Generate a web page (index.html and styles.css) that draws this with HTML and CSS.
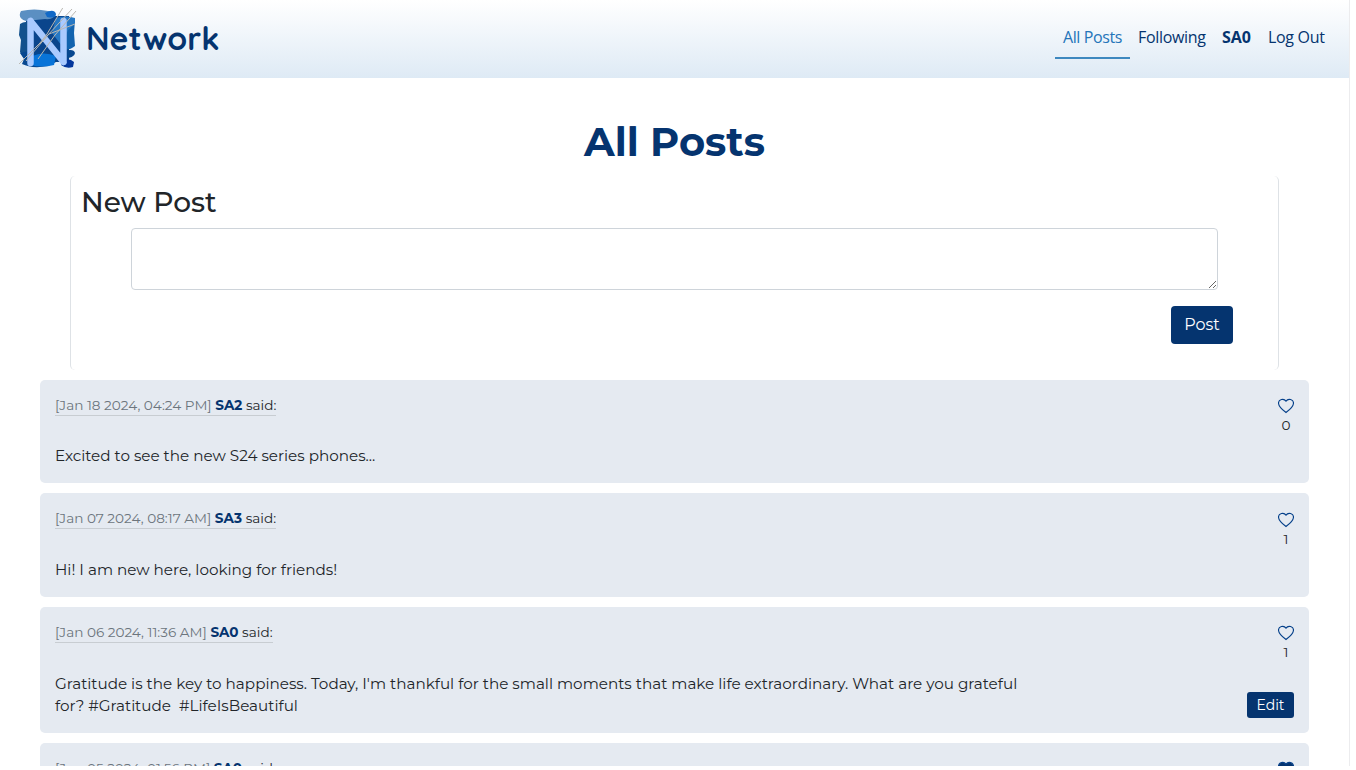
FILE: index.html
```html
<!DOCTYPE html>
<html lang="en">
<head>
<meta charset="utf-8">
<title>Network</title>
<link rel="stylesheet" href="styles.css">
</head>
<body>
<div class="page">
<header class="navbar">
  <a class="brand">
    <svg class="logo" width="60" height="62" viewBox="0 0 60 62">
      <path d="M8 8H51V54H8Z" fill="#0a458c"/>
      <path d="M2 16Q8 12 13 16L14 46Q10 52 5 49L2 44L3 32L1 27Z" fill="#12518d"/>
      <path d="M45 11Q53 7 57 12L56 25L57 38Q51 43 44 41Z" fill="#1263ae"/>
      <path d="M3 3Q16 0 30 3L37 5Q37 12 27 11L8 13Q-1 10 3 3Z" fill="#5b8fc2"/>
      <path d="M27 5Q36 0 38 6Q38 11 29 9Z" fill="#1269c6"/>
      <path d="M2 45Q10 42 22 44L46 43Q56 40 57 45Q57 50 44 51L30 58Q14 61 4 56L6 51Z" fill="#07478f"/>
      <path d="M14 48Q26 43 38 48L36 57Q23 60 13 57Z" fill="#0874d8"/>
      <path d="M43 53Q51 49 56 54L55 59Q48 61 43 57Z" fill="#04379c"/>
      <path d="M38 10L34 25L44 38L50 22L57 16V10Q48 7 38 10Z" fill="#2678c4"/>
      <path d="M12.500 55V13M12.500 13L45.500 54M45.500 54V13" fill="none" stroke="#a9caff" stroke-width="6.500" stroke-linecap="round"/>
      <path d="M44.700 0L29 26L22 35L1 56M54 1L29 28L8 53M58 3L37 27L20 51M57 16L31 26L22 36" fill="none" stroke="#bab8b2" stroke-width="1"/>
    </svg>
    <span class="brand-name">Network</span>
  </a>
  <nav class="links">
    <a class="link active">All Posts</a>
    <a class="link following">Following</a>
    <a class="link user">SA0</a>
    <a class="link logout">Log Out</a>
  </nav>
</header>
<main>
  <h1 class="title">All Posts</h1>
  <section class="composer">
    <h2 class="composer-title">New Post</h2>
    <textarea class="field"></textarea>
    <div class="actions"><button class="post-btn">Post</button></div>
  </section>
  <article class="post">
    <div class="content">
      <div class="meta"><span class="date">[Jan 18 2024, 04:24 PM]</span> <b>SA2</b> said:</div>
      <p class="text">Excited to see the new S24 series phones...</p>
    </div>
    <div class="side"><svg class="heart" viewBox="0 0 16 16"><path d="M8 14.500C2.500 10.600.5 7.800.5 5.100.5 1.600 5.700-.1 8 3.100 10.300-.1 15.500 1.600 15.500 5.100c0 2.700-2 5.500-7.500 9.400z"/></svg><span class="count">0</span></div>
  </article>
  <article class="post second">
    <div class="content">
      <div class="meta"><span class="date">[Jan 07 2024, 08:17 AM]</span> <b>SA3</b> said:</div>
      <p class="text">Hi! I am new here, looking for friends!</p>
    </div>
    <div class="side"><svg class="heart" viewBox="0 0 16 16"><path d="M8 14.500C2.500 10.600.5 7.800.5 5.100.5 1.600 5.700-.1 8 3.100 10.300-.1 15.500 1.600 15.500 5.100c0 2.700-2 5.500-7.500 9.400z"/></svg><span class="count">1</span></div>
  </article>
  <article class="post third">
    <div class="content">
      <div class="meta"><span class="date">[Jan 06 2024, 11:36 AM]</span> <b>SA0</b> said:</div>
      <p class="text">Gratitude is the key to happiness. Today, I'm thankful for the small moments that make life extraordinary. What are you grateful<br>for? #Gratitude&nbsp; #LifeIsBeautiful</p>
    </div>
    <div class="side"><svg class="heart" viewBox="0 0 16 16"><path d="M8 14.500C2.500 10.600.5 7.800.5 5.100.5 1.600 5.700-.1 8 3.100 10.300-.1 15.500 1.600 15.500 5.100c0 2.700-2 5.500-7.500 9.400z"/></svg><span class="count">1</span><button class="edit-btn">Edit</button></div>
  </article>
  <article class="post">
    <div class="content">
      <div class="meta"><span class="date">[Jan 05 2024, 01:56 PM]</span> <b>SA0</b> said:</div>
    </div>
    <div class="side"><svg class="heart liked" viewBox="0 0 16 16"><path d="M8 14.500C2.500 10.600.5 7.800.5 5.100.5 1.600 5.700-.1 8 3.100 10.300-.1 15.500 1.600 15.500 5.100c0 2.700-2 5.500-7.500 9.400z"/></svg></div>
  </article>
</main>
</div>
</body>
</html>
```
FILE: styles.css
```css
* { box-sizing: border-box; }
body { margin: 0; background: #fff; color: #212529; font-family: Montserrat, Inter, sans-serif; overflow: hidden; }
.page { width: 1350px; height: 766px; overflow: hidden; border-right: 1px solid #ececee; }
.navbar { height: 78px; padding: 8px 16px 0 18px; display: flex; justify-content: space-between; background: linear-gradient(#fff, #deeaf5); }
.brand { display: flex; gap: 8px; color: #05346f; }
.logo { flex: none; }
.brand-name { font: 700 32px/60px Quicksand, Lato, sans-serif; }
.links { display: flex; height: 51px; font: 400 16px/24px "Segoe UI", "Open Sans", sans-serif; }
.link { padding: 17px 8px 0; color: #05346f; white-space: nowrap; letter-spacing: -.32px; }
.active { width: 75px; color: #2474b9; border-bottom: 2px solid #3d88bf; letter-spacing: -.4px; }
.following { width: 84px; }
.user { width: 46px; font-weight: 700; letter-spacing: 0; }
.logout { width: 73px; }
.title { margin: 40px 0 10px; text-align: center; font-size: 40px; line-height: 48px; font-weight: 700; color: #05346f; }
.composer { width: 1209px; height: 194px; margin: 0 0 10px 70px; padding: 9px 10px 0 10px; border: solid #dee2e6; border-width: 0 1px; border-radius: 5px; }
.composer-title { margin: 0 0 9px; font-size: 28px; line-height: 34px; font-weight: 500; }
.field { display: block; width: 1087px; height: 62px; margin-left: 50px; border: 1px solid #ced4da; border-radius: 4px; background: #fff; }
.actions { display: flex; justify-content: flex-end; padding: 16px 35px 0 0; }
button { border: 0; padding: 0; border-radius: 4px; background: #05346f; color: #fff; font-family: inherit; font-weight: 400; }
.post-btn { width: 62px; height: 38px; padding-bottom: 1px; font-size: 16px; }
.edit-btn { width: 47px; height: 26px; margin-top: 30px; border-radius: 3px; font-size: 14px; }
.post { display: flex; justify-content: space-between; width: 1269px; height: 103px; margin: 0 0 10px 40px; padding: 15px; border-radius: 5px; background: #e5eaf1; }
.second { height: 104px; }
.third { height: 126px; }
.meta { width: max-content; height: 21px; border-bottom: 1px solid #c8cdd2; font-size: 13.600px; line-height: 21px; font-weight: 400; white-space: nowrap; }
.meta b { font-weight: 700; color: #05346f; }
.date { color: #6c757d; }
.text { margin: 29px 0 0; font-size: 15.200px; line-height: 22px; font-weight: 400; white-space: nowrap; }
.second .text, .third .text { margin-top: 30px; }
.side { width: 47px; display: flex; flex-direction: column; align-items: flex-end; }
.heart { width: 16px; height: 16px; margin-top: 3px; fill: none; stroke: #05408a; stroke-width: 1.1; flex: none; }
.second .heart { margin-top: 4px; }
.liked { fill: #05346f; }
.count { width: 16px; margin-top: 1px; text-align: center; font-size: 13.600px; line-height: 20px; font-weight: 400; }
```
